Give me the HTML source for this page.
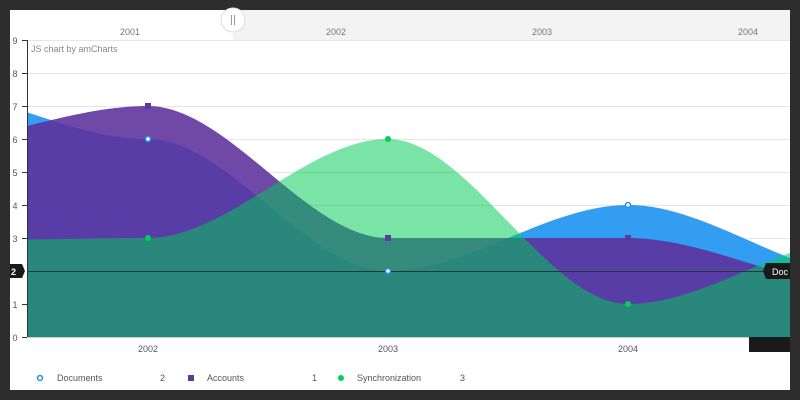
<!DOCTYPE html>
<html><head><style>
body{margin:0;background:#2d2d2d;width:800px;height:400px;overflow:hidden;font-family:"Liberation Sans",sans-serif}
</style></head><body>
<svg width="800" height="400" xmlns="http://www.w3.org/2000/svg" style="position:absolute;left:0;top:0">
<rect x="10" y="10" width="780" height="380" fill="#fff"/>
<rect x="233" y="10" width="557" height="30" fill="#f3f3f3"/>
<g font-size="9" fill="#777" text-anchor="middle">
<text x="130" y="35">2001</text><text x="336" y="35">2002</text><text x="542" y="35">2003</text><text x="748" y="35">2004</text>
</g>
<circle cx="233" cy="20" r="12" fill="#fff" stroke="#ddd"/>
<line x1="231.5" y1="15" x2="231.5" y2="25" stroke="#999"/><line x1="234.5" y1="15" x2="234.5" y2="25" stroke="#999"/>
<g stroke="#e6e6e6">
<line x1="27" y1="40.5" x2="790" y2="40.5"/><line x1="27" y1="73.5" x2="790" y2="73.5"/><line x1="27" y1="106.5" x2="790" y2="106.5"/><line x1="27" y1="139.5" x2="790" y2="139.5"/><line x1="27" y1="172.5" x2="790" y2="172.5"/><line x1="27" y1="205.5" x2="790" y2="205.5"/><line x1="27" y1="238.5" x2="790" y2="238.5"/>
</g>
<defs><clipPath id="c"><rect x="27" y="40" width="763" height="297"/></clipPath></defs>
<g clip-path="url(#c)">
<path d="M-92 337 L-92 86.2 C-12 86.2 68 139 148 139 C228 139 308 271 388 271 C468 271 548 205 628 205 C708 205 788 275.3 868 275.3 L868 337Z" fill="#339df1"/>
<path d="M-92 337 L-92 145.6 C-12 145.6 68 106 148 106 C228 106 308 238 388 238 C468 238 548 238 628 238 C708 238 788 287.5 868 287.5 L868 337Z" fill="rgba(94,49,157,0.89)"/>
<path d="M-92 337 L-92 241.3 C-12 241.3 68 238 148 238 C228 238 308 139 388 139 C468 139 548 304 628 304 C708 304 788 236 868 236 L868 337Z" fill="rgba(0,204,85,0.52)"/>
</g>
<line x1="27" y1="271.5" x2="790" y2="271.5" stroke="#1e3a36"/>
<line x1="27.5" y1="40" x2="27.5" y2="337" stroke="#333"/>
<line x1="27" y1="337.5" x2="790" y2="337.5" stroke="#ccc"/>
<g stroke="#333"><line x1="22" y1="40.5" x2="27" y2="40.5"/><line x1="22" y1="73.5" x2="27" y2="73.5"/><line x1="22" y1="106.5" x2="27" y2="106.5"/><line x1="22" y1="139.5" x2="27" y2="139.5"/><line x1="22" y1="172.5" x2="27" y2="172.5"/><line x1="22" y1="205.5" x2="27" y2="205.5"/><line x1="22" y1="238.5" x2="27" y2="238.5"/><line x1="22" y1="304.5" x2="27" y2="304.5"/><line x1="22" y1="337.5" x2="27" y2="337.5"/></g>
<g font-size="9" fill="#555" text-anchor="middle">
<text x="15" y="44">9</text><text x="15" y="77">8</text><text x="15" y="110">7</text><text x="15" y="143">6</text><text x="15" y="176">5</text><text x="15" y="209">4</text><text x="15" y="242">3</text><text x="15" y="308">1</text><text x="15" y="341">0</text>
</g>
<text x="31" y="52" font-size="9" fill="#888">JS chart by amCharts</text>
<g font-size="9" fill="#555" text-anchor="middle"><text x="148" y="352">2002</text><text x="388" y="352">2003</text><text x="628" y="352">2004</text></g>
<circle cx="148" cy="139" r="2.5" fill="#fff" stroke="#2a8fe8" stroke-width="1.5"/>
<circle cx="388" cy="271" r="2.5" fill="#fff" stroke="#2a8fe8" stroke-width="1.5"/>
<circle cx="628" cy="205" r="2.5" fill="#fff" stroke="#2a8fe8" stroke-width="1.5"/>
<rect x="145" y="103" width="6" height="6" fill="#5b3a9e"/><rect x="385" y="235" width="6" height="6" fill="#5b3a9e"/><rect x="625" y="235" width="6" height="6" fill="#5b3a9e"/>
<circle cx="148" cy="238" r="3" fill="#00d05a"/><circle cx="388" cy="139" r="3" fill="#00d05a"/><circle cx="628" cy="304" r="3" fill="#00d05a"/>
<path d="M10 264 H22 L25 271 L22 278 H10Z" fill="#1a1a1a"/>
<text x="11" y="275" font-size="9" fill="#fff" font-weight="bold">2</text>
<path d="M766 263 H790 V279 H766 L763 271Z" fill="#1a1a1a"/>
<text x="772" y="275" font-size="9" fill="#fff">Doc</text>
<rect x="749" y="337" width="41" height="15" fill="#1a1a1a"/>
<circle cx="40" cy="378" r="2.5" fill="#fff" stroke="#2a8fe8" stroke-width="1.5"/>
<rect x="188" y="375" width="6" height="6" fill="#5b3a9e"/>
<circle cx="341" cy="378" r="3" fill="#00d05a"/>
<g font-size="9" fill="#555"><text x="57" y="381">Documents</text><text x="160" y="381">2</text><text x="207" y="381">Accounts</text><text x="312" y="381">1</text><text x="357" y="381">Synchronization</text><text x="460" y="381">3</text></g>
</svg>
</body></html>
